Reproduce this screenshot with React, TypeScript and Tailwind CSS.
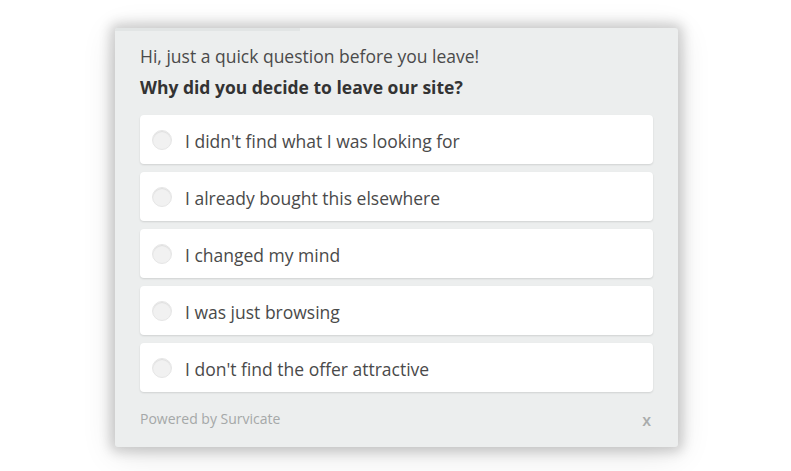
const options = [
  "I didn't find what I was looking for",
  "I already bought this elsewhere",
  "I changed my mind",
  "I was just browsing",
  "I don't find the offer attractive",
];

export default function App() {
  return (
    <div className="flex h-[471px] w-[791px] justify-center bg-white pt-[28px] pl-[2px] font-['Open_Sans',sans-serif]">
      <div className="relative h-[419px] w-[563px] rounded-[3px] bg-[#eceeee] px-[25px] pt-[13px] shadow-[0_0_12px_5px_rgba(0,0,0,0.17),0_6px_34px_rgba(0,0,0,0.12)]">
        {/* progress */}
        <div className="absolute left-0 top-0 h-[3px] w-[185px] rounded-tl-[3px] bg-[#e2e5e5]" />
        <p className="text-[17.5px] leading-[31px] text-[#4a4a4a]">Hi, just a quick question before you leave!</p>
        <p className="text-[17.5px] font-bold leading-[31px] text-[#333]">Why did you decide to leave our site?</p>
        <ul className="mt-[12px] flex flex-col gap-[8px]">
          {options.map((o) => (
            <li
              key={o}
              className="flex h-[49px] items-center gap-[13px] rounded-[4px] bg-white pl-[12px] shadow-[0_1px_2px_rgba(0,0,0,0.12)]"
            >
              <span className="h-[20px] w-[20px] flex-none rounded-full border border-[#e6e6e6] bg-[#f1f1f1] shadow-[inset_0_1px_1px_rgba(0,0,0,0.08)]" />
              <span className="pt-[3px] text-[17.5px] text-[#4a4a4a]">{o}</span>
            </li>
          ))}
        </ul>
        <div className="mt-[12px] flex items-center justify-between pr-[2px]">
          <span className="text-[14px] text-[#a5a8a8]">Powered by Survicate</span>
          <span className="mt-[4px] text-[16px] font-semibold text-[#a9acac]">x</span>
        </div>
      </div>
    </div>
  );
}
